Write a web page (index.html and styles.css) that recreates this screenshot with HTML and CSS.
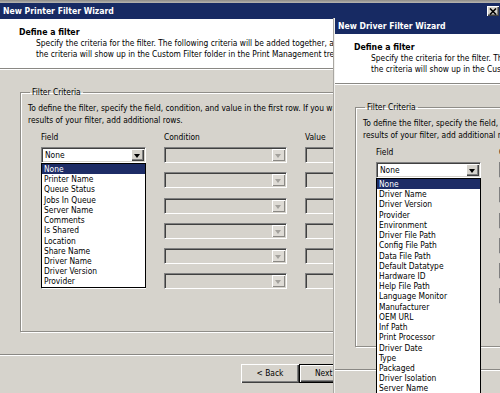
FILE: index.html
```html
<!DOCTYPE html>
<html>
<head>
<meta charset="utf-8">
<title>Filter Wizards</title>
<link rel="stylesheet" href="styles.css">
</head>
<body>
<div class="screen">
  <div class="topstrip"></div>

  <section class="win win-back">
    <div class="titlebar">
      <span class="title">New Printer Filter Wizard</span>
      <span class="closebtn"><svg width="8" height="7" viewBox="0 0 8 7"><path d="M1 0.5L7 6.5M7 0.5L1 6.5" stroke="#000" stroke-width="1.6"/></svg></span>
    </div>
    <div class="header">
      <div class="h-title">Define a filter</div>
      <div class="h-desc">Specify the criteria for the filter. The following criteria will be added together, and only the printers that meet all<br>the criteria will show up in the Custom Filter folder in the Print Management tree.</div>
    </div>
    <div class="body">
      <fieldset class="group">
        <legend>Filter Criteria</legend>
        <p class="g-desc">To define the filter, specify the field, condition, and value in the first row. If you want to narrow the<br>results of your filter, add additional rows.</p>
        <div class="cols head"><span>Field</span><span>Condition</span><span>Value</span></div>
        <div class="cols rows">
          <div class="combo open"><span class="val">None</span><span class="arrow"></span>
            <ul class="droplist">
              <li class="sel">None</li>
              <li>Printer Name</li>
              <li>Queue Status</li>
              <li>Jobs In Queue</li>
              <li>Server Name</li>
              <li>Comments</li>
              <li>Is Shared</li>
              <li>Location</li>
              <li>Share Name</li>
              <li>Driver Name</li>
              <li>Driver Version</li>
              <li>Provider</li>
            </ul>
          </div>
          <div class="combo dis"><span class="arrow"></span></div>
          <div class="edit"></div>
          <div class="combo"><span class="arrow"></span></div>
          <div class="combo dis"><span class="arrow"></span></div>
          <div class="edit"></div>
          <div class="combo"><span class="arrow"></span></div>
          <div class="combo dis"><span class="arrow"></span></div>
          <div class="edit"></div>
          <div class="combo"><span class="arrow"></span></div>
          <div class="combo dis"><span class="arrow"></span></div>
          <div class="edit"></div>
          <div class="combo"><span class="arrow"></span></div>
          <div class="combo dis"><span class="arrow"></span></div>
          <div class="edit"></div>
          <div class="combo"><span class="arrow"></span></div>
          <div class="combo dis"><span class="arrow"></span></div>
          <div class="edit"></div>
        </div>
      </fieldset>
      <div class="buttonbar">
        <button class="btn">&lt; Back</button>
        <button class="btn default">Next &gt;</button>
        <button class="btn cancel">Cancel</button>
      </div>
    </div>
  </section>

  <section class="win win-front">
    <div class="titlebar">
      <span class="title">New Driver Filter Wizard</span>
    </div>
    <div class="header">
      <div class="h-title">Define a filter</div>
      <div class="h-desc">Specify the criteria for the filter. The following criteria will be added together, and only the drivers that meet all<br>the criteria will show up in the Custom Filter folder in the Print Management tree.</div>
    </div>
    <div class="body">
      <fieldset class="group">
        <legend>Filter Criteria</legend>
        <p class="g-desc">To define the filter, specify the field, condition, and value in the first row. If you want to narrow the<br>results of your filter, add additional rows.</p>
        <div class="cols head"><span>Field</span><span>Condition</span><span>Value</span></div>
        <div class="cols rows">
          <div class="combo open"><span class="val">None</span><span class="arrow"></span>
            <ul class="droplist">
              <li class="sel">None</li>
              <li>Driver Name</li>
              <li>Driver Version</li>
              <li>Provider</li>
              <li>Environment</li>
              <li>Driver File Path</li>
              <li>Config File Path</li>
              <li>Data File Path</li>
              <li>Default Datatype</li>
              <li>Hardware ID</li>
              <li>Help File Path</li>
              <li>Language Monitor</li>
              <li>Manufacturer</li>
              <li>OEM URL</li>
              <li>Inf Path</li>
              <li>Print Processor</li>
              <li>Driver Date</li>
              <li>Type</li>
              <li>Packaged</li>
              <li>Driver Isolation</li>
              <li>Server Name</li>
            </ul>
          </div>
          <div class="combo dis"><span class="arrow"></span></div>
          <div class="edit"></div>
          <div class="combo"><span class="arrow"></span></div>
          <div class="combo dis"><span class="arrow"></span></div>
          <div class="edit"></div>
          <div class="combo"><span class="arrow"></span></div>
          <div class="combo dis"><span class="arrow"></span></div>
          <div class="edit"></div>
          <div class="combo"><span class="arrow"></span></div>
          <div class="combo dis"><span class="arrow"></span></div>
          <div class="edit"></div>
          <div class="combo"><span class="arrow"></span></div>
          <div class="combo dis"><span class="arrow"></span></div>
          <div class="edit"></div>
          <div class="combo"><span class="arrow"></span></div>
          <div class="combo dis"><span class="arrow"></span></div>
          <div class="edit"></div>
        </div>
      </fieldset>
      <div class="buttonbar">
        <button class="btn">&lt; Back</button>
        <button class="btn default">Next &gt;</button>
        <button class="btn cancel">Cancel</button>
      </div>
    </div>
  </section>
</div>
</body>
</html>
```
FILE: styles.css
```css
* { box-sizing: border-box; }
html, body { margin: 0; padding: 0; }
body {
  width: 500px;
  height: 393px;
  overflow: hidden;
  background: #d6d3cc;
  font-family: "DejaVu Sans Condensed", "DejaVu Sans", sans-serif;
  font-stretch: condensed;
  font-size: 8.35px;
  color: #000;
}
.screen {
  position: relative;
  width: 500px;
  height: 393px;
  overflow: hidden;
}
.topstrip {
  height: 3px;
  background: linear-gradient(#8d8b87, #b9b7b2);
}
.win {
  width: 500px;
  background: #d6d3cc;
  overflow: hidden;
}
.win-back { height: 390px; }
.win-front {
  position: absolute;
  left: 334px;
  top: 18px;
  height: 380px;
  border-left: 1px solid #f2f1ee;
  box-shadow: -1px 0 0 #a9a7a2;
}
.titlebar {
  height: 16px;
  background: #172a63;
  color: #fff;
  font-weight: bold;
  font-size: 8.6px;
  display: flex;
  align-items: center;
  justify-content: space-between;
  padding: 0 1px 0 3px;
  white-space: nowrap;
}
.closebtn {
  width: 12px;
  height: 10px;
  background: #d6d3cc;
  box-shadow: inset 1px 1px #fff, inset -1px -1px #404040, inset -2px -2px #808080;
  display: flex;
  align-items: center;
  justify-content: center;
}
.header {
  height: 50px;
  background: #fff;
  border-bottom: 1px solid #8a8884;
  padding: 7px 0 0 19px;
  white-space: nowrap;
}
.h-title {
  font-weight: bold;
  line-height: 12px;
  font-size: 8.7px;
}
.h-desc {
  padding-left: 17px;
  line-height: 11px;
}
.body {
  border-top: 1px solid #fff;
  padding-top: 16px;
}
.group {
  margin: 0 0 0 20px;
  width: 475px;
  min-width: 0;
  padding: 4px 0 42px 7px;
  border: 1px solid #8f8d88;
  box-shadow: 1px 1px 0 #fff, inset 1px 1px 0 #fff;
}
.group legend {
  padding: 0 2px;
  margin-left: 2px;
  line-height: 12px;
}
.g-desc {
  margin: 0;
  line-height: 12px;
  white-space: nowrap;
}
.cols {
  display: grid;
  grid-template-columns: 105px 123px 120px;
  column-gap: 18px;
  margin-left: 13px;
}
.head {
  margin-top: 5px;
  line-height: 12px;
  margin-bottom: 4px;
}
.rows {
  grid-auto-rows: 16px;
  row-gap: 9.3px;
}
.combo, .edit {
  position: relative;
  background: #fff;
  border-top: 1px solid #808080;
  border-left: 1px solid #808080;
  border-right: 1px solid #fff;
  border-bottom: 1px solid #fff;
  box-shadow: inset 1px 1px #404040, inset -1px -1px #d6d3cc;
}
.combo.dis, .edit {
  background: #d6d3cc;
}
.combo .val {
  position: absolute;
  left: 3px;
  top: 1px;
  line-height: 12px;
}
.arrow {
  position: absolute;
  right: 1px;
  top: 1px;
  bottom: 1px;
  width: 13px;
  background: #d6d3cc;
  box-shadow: inset 1px 1px #fff, inset -1px -1px #404040, inset -2px -2px #808080;
}
.arrow::after {
  content: "";
  position: absolute;
  left: 3px;
  top: 5px;
  border-left: 3.5px solid transparent;
  border-right: 3.5px solid transparent;
  border-top: 4px solid #000;
}
.combo.dis .arrow {
  background: #dedbd5;
  box-shadow: inset 1px 1px #fff, inset -1px -1px #8a8884;
}
.combo.dis .arrow::after {
  border-top-color: #a3a19c;
}
.droplist {
  position: absolute;
  left: -1px;
  right: -1px;
  top: 15px;
  margin: 0;
  padding: 0;
  list-style: none;
  background: #fff;
  border: 1px solid #000;
  z-index: 2;
}
.droplist li {
  line-height: 10.22px;
  height: 10.22px;
  padding-left: 2px;
  white-space: nowrap;
}
.droplist li.sel {
  background: #1d2c66;
  color: #fff;
}
.buttonbar {
  margin-top: 21.5px;
  border-top: 1px solid #8a8884;
  box-shadow: inset 0 1px #fff;
  padding: 9px 0 0 241px;
  display: flex;
}
.btn {
  width: 58px;
  height: 19px;
  padding: 0;
  font: inherit;
  color: #000;
  background: #d6d3cc;
  border: none;
  box-shadow: inset 1px 1px #fff, inset -1px -1px #404040, inset -2px -2px #808080;
}
.btn.default {
  border: 1px solid #000;
}
.btn.cancel {
  margin-left: 8px;
}
```
